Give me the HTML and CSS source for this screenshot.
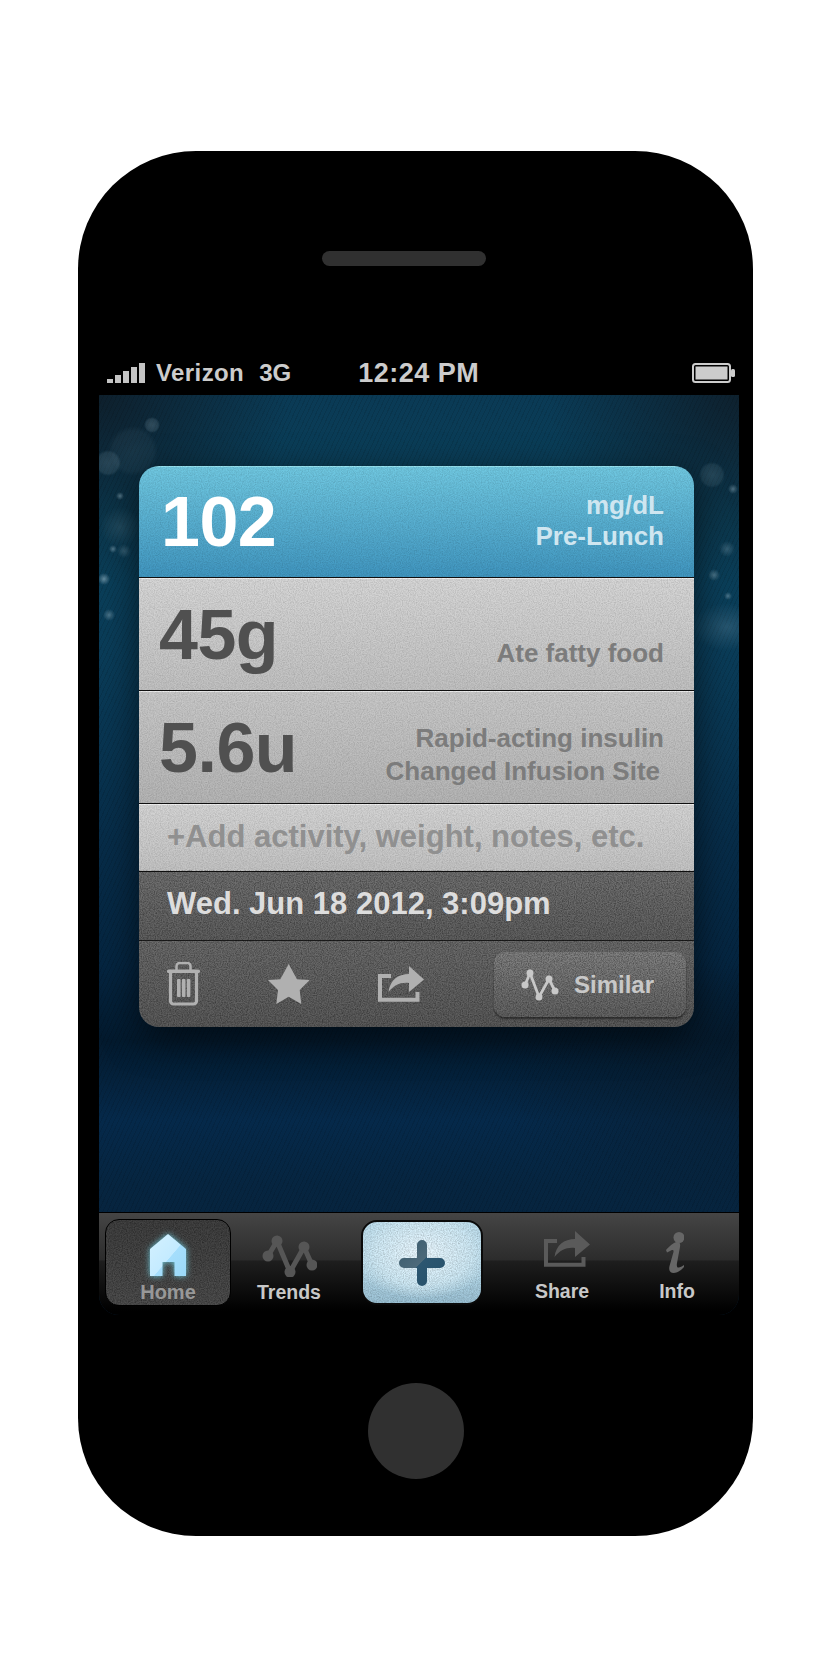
FILE: index.html
```html
<!DOCTYPE html>
<html lang="en">
<head>
<meta charset="UTF-8">
<meta name="viewport" content="width=device-width, initial-scale=1.0">
<title>Glucose Log</title>
<link rel="stylesheet" href="styles.css">
</head>
<body>

<svg class="defs" width="0" height="0">
    <symbol id="share" viewBox="0 0 46 36">
        <path d="M13 10H2V33.800H39.500V26" fill="none" stroke="currentColor" stroke-width="4"/>
        <path d="M10.500 26C12 14 20 8 31 8V0L46 13.500L31 26V17C23 16 16 19 10.500 26Z" fill="currentColor"/>
    </symbol>
    <filter id="noise">
        <feTurbulence type="fractalNoise" baseFrequency="0.85" numOctaves="2" seed="4"/>
        <feColorMatrix values="0 0 0 0 0  0 0 0 0 0  0 0 0 0 0  1.8 0 0 0 -0.6"/>
    </filter>
</svg>

<div class="phone">
    <div class="speaker"></div>

    <!-- status bar -->
    <div class="status">
        <div class="signal"><i></i><i></i><i></i><i></i><i></i></div>
        <span class="carrier">Verizon</span>
        <span class="network">3G</span>
        <span class="clock">12:24 PM</span>
        <svg class="battery" viewBox="0 0 43 20">
            <rect x="1" y="1" width="37" height="18" rx="2.500" fill="none" stroke="#ccc" stroke-width="2"/>
            <rect x="3.500" y="3.500" width="32" height="13" fill="#ccc"/>
            <rect x="39" y="6" width="4" height="8" rx="1.500" fill="#ccc"/>
        </svg>
    </div>

    <div class="screen">
        <!-- log entry card -->
        <div class="card">
            <div class="row row-glucose">
                <div class="value">102</div>
                <div class="note note-glucose">mg/dL<br>Pre-Lunch</div>
            </div>
            <div class="row row-carbs">
                <div class="value">45g</div>
                <div class="note note-carbs">Ate fatty food</div>
            </div>
            <div class="row row-insulin">
                <div class="value">5.6u</div>
                <div class="note note-insulin">Rapid-acting insulin<br><span class="site">Changed Infusion Site</span></div>
            </div>
            <div class="row-add"><span class="line">+Add activity, weight, notes, etc.</span></div>
            <div class="row-date"><span class="line">Wed. Jun 18 2012, 3:09pm</span></div>
            <div class="toolbar">
                <svg class="icon-trash" viewBox="0 0 33 44">
                    <path d="M9.500 8V4a3 3 0 0 1 3-3h8a3 3 0 0 1 3 3V8" fill="none" stroke="currentColor" stroke-width="2.500"/>
                    <rect y="7.500" width="33" height="3.500" rx="1.500" fill="currentColor"/>
                    <path d="M3.500 10V39a3 3 0 0 0 3 3h20a3 3 0 0 0 3-3V10" fill="none" stroke="currentColor" stroke-width="3.200"/>
                    <rect x="10" y="17" width="3.600" height="18" rx="1" fill="currentColor"/>
                    <rect x="14.900" y="17" width="3.600" height="18" rx="1" fill="currentColor"/>
                    <rect x="19.800" y="17" width="3.600" height="18" rx="1" fill="currentColor"/>
                </svg>
                <svg class="icon-star" viewBox="0 0 42 40">
                    <polygon points="20.700,0 29,15.300 41.700,16 31.700,26 33.300,40 20.700,32.700 8.300,40 10,26 0,16 12.300,15.300" fill="currentColor"/>
                </svg>
                <svg class="icon-share"><use href="#share"/></svg>
                <div class="similar">
                    <svg class="icon-zig" viewBox="0 0 42 36">
                        <polyline points="6,18 11,6 20,30 30,12 36,24" fill="none" stroke="currentColor" stroke-width="2.800"/>
                        <circle cx="6" cy="18" r="3.500" fill="currentColor"/>
                        <circle cx="11" cy="6" r="3.500" fill="currentColor"/>
                        <circle cx="20" cy="30" r="3.500" fill="currentColor"/>
                        <circle cx="30" cy="12" r="3.500" fill="currentColor"/>
                        <circle cx="36" cy="24" r="3.500" fill="currentColor"/>
                    </svg>
                    <span class="line">Similar</span>
                </div>
            </div>
            <svg class="grain grain-card" width="555" height="561"><rect width="555" height="561" filter="url(#noise)"/></svg>
        </div>

        <!-- tab bar -->
        <div class="tabbar">
            <div class="tab tab-home">
                <svg class="icon-home" viewBox="0 0 36 42">
                    <defs>
                        <linearGradient id="homeFill" x1="0" y1="0" x2="1" y2="1">
                            <stop offset="0" stop-color="#d4f1ff"/>
                            <stop offset="0.55" stop-color="#c4ebff"/>
                            <stop offset="0.56" stop-color="#a5defc"/>
                            <stop offset="1" stop-color="#9bd9f8"/>
                        </linearGradient>
                    </defs>
                    <path d="M18 0L36 15V42H24.500V28H12.500V42H0V15Z" fill="url(#homeFill)"/>
                </svg>
                <span class="line">Home</span>
                <svg class="grain" width="126" height="87"><rect width="126" height="87" filter="url(#noise)"/></svg>
            </div>
            <div class="tab tab-trends">
                <svg class="icon-trends" viewBox="0 0 56 44">
                    <polyline points="7,23 16,8 29,39 43,14 51,32" fill="none" stroke="currentColor" stroke-width="5"/>
                    <circle cx="7" cy="23" r="5.500" fill="currentColor"/>
                    <circle cx="16" cy="8" r="5.500" fill="currentColor"/>
                    <circle cx="29" cy="39" r="5.500" fill="currentColor"/>
                    <circle cx="43" cy="14" r="5.500" fill="currentColor"/>
                    <circle cx="51" cy="32" r="5.500" fill="currentColor"/>
                </svg>
                <span>Trends</span>
            </div>
            <div class="tab-add">
                <svg class="icon-plus" viewBox="0 0 46 46">
                    <defs>
                        <linearGradient id="plusFill" x1="0" y1="0" x2="1" y2="1">
                            <stop offset="0" stop-color="#38596c"/>
                            <stop offset="0.48" stop-color="#4d6a7a"/>
                            <stop offset="0.49" stop-color="#2c5670"/>
                            <stop offset="1" stop-color="#25506a"/>
                        </linearGradient>
                    </defs>
                    <path d="M18 5a5 5 0 0 1 10 0V18H41a5 5 0 0 1 0 10H28V41a5 5 0 0 1-10 0V28H5a5 5 0 0 1 0-10H18Z" fill="url(#plusFill)"/>
                </svg>
                <svg class="grain" width="122" height="85"><rect width="122" height="85" filter="url(#noise)"/></svg>
            </div>
            <div class="tab tab-share">
                <svg class="icon-share"><use href="#share"/></svg>
                <span>Share</span>
            </div>
            <div class="tab tab-info">
                <svg class="icon-info" viewBox="0 0 18 41">
                    <circle cx="13" cy="5.500" r="5.500" fill="currentColor"/>
                    <path d="M0 18C3 15 7 10.500 11 10C14 10 14.500 12 14 15L11 31C10.500 34 11 36 13 35.500C15 35 16.500 34 18 33L18 35C15 38.500 11 41 7.500 41C4 41 2.500 38 3.500 34L7.500 20C8 17.500 6 17.500 4 19L1 20.500Z" fill="currentColor"/>
                </svg>
                <span>Info</span>
            </div>
        </div>
    </div>

    <div class="home-button"></div>
</div>

</body>
</html>
```

FILE: styles.css
```css
body {
    margin: 0;
    background-color: #fff;
    font-family: "Liberation Sans", Arial, sans-serif;
    font-weight: bold;
}

.defs {
    position: absolute;
}

.phone {
    box-sizing: border-box;
    width: 675px;
    height: 1385px;
    margin: 151px 0 0 78px;
    padding-top: 100px;
    background-color: #000;
    border-radius: 118px;
    display: flex;
    flex-direction: column;
}

.speaker {
    width: 164px;
    height: 15px;
    margin-left: 244px;
    background-color: #303030;
    border-radius: 8px;
    flex: none;
}

/* status bar */

.status {
    box-sizing: border-box;
    height: 44px;
    margin-top: 85px;
    padding: 0 18px 0 29px;
    display: flex;
    align-items: flex-start;
    color: #ccc;
    flex: none;
}

.signal {
    display: flex;
    align-items: flex-end;
    gap: 2.500px;
    height: 20px;
    margin-top: 12px;
    width: 38px;
}

.signal i {
    width: 5.600px;
    background-color: #c4c4c4;
}

.signal i:nth-child(1) { height: 4px; }
.signal i:nth-child(2) { height: 8px; }
.signal i:nth-child(3) { height: 12px; }
.signal i:nth-child(4) { height: 16px; }
.signal i:nth-child(5) { height: 20px; }

.carrier,
.network,
.clock {
    line-height: 30px;
    font-size: 24px;
    margin-top: 7px;
}

.carrier {
    margin-left: 11px;
    letter-spacing: 0.400px;
}

.network {
    margin-left: 15px;
}

.clock {
    margin-left: 67px;
    font-size: 27px;
    letter-spacing: 0.500px;
}

.battery {
    width: 43px;
    height: 20px;
    margin-top: 12px;
    margin-left: auto;
}

/* screen */

.screen {
    width: 640px;
    height: 920px;
    margin-left: 21px;
    flex: none;
    display: flex;
    flex-direction: column;
    border-radius: 0 0 20px 20px;
    background:
        radial-gradient(circle 8px at 53px 30px, rgba(150, 180, 195, 0.26), rgba(150, 180, 195, 0.16) 75%, transparent),
        radial-gradient(circle 25px at 34px 56px, rgba(130, 165, 185, 0.1), rgba(130, 165, 185, 0.07) 80%, transparent),
        radial-gradient(circle 13px at 9px 68px, rgba(150, 180, 195, 0.2), rgba(150, 180, 195, 0.14) 80%, transparent),
        radial-gradient(circle 4px at 21px 101px, rgba(170, 200, 215, 0.45), transparent),
        radial-gradient(circle 20px at 21px 132px, rgba(140, 175, 190, 0.16), transparent),
        radial-gradient(circle 4px at 14px 154px, rgba(170, 200, 215, 0.45), transparent),
        radial-gradient(circle 7px at 25px 156px, rgba(170, 200, 215, 0.25), transparent),
        radial-gradient(circle 6px at 5px 184px, rgba(170, 200, 215, 0.55), transparent),
        radial-gradient(circle 6px at 10px 220px, rgba(170, 200, 215, 0.4), transparent),
        radial-gradient(circle 13px at 613px 80px, rgba(140, 175, 190, 0.2), rgba(140, 175, 190, 0.12) 80%, transparent),
        radial-gradient(circle 5px at 634px 94px, rgba(170, 200, 215, 0.4), transparent),
        radial-gradient(circle 8px at 628px 154px, rgba(170, 200, 215, 0.25), transparent),
        radial-gradient(circle 6px at 615px 180px, rgba(170, 200, 215, 0.4), transparent),
        radial-gradient(circle 4px at 629px 201px, rgba(170, 200, 215, 0.4), transparent),
        radial-gradient(ellipse 36px 24px at 628px 232px, rgba(150, 185, 205, 0.2), transparent),
        repeating-linear-gradient(115deg, rgba(0, 0, 0, 0.1) 0 1px, transparent 1px 4px),
        radial-gradient(circle 190px at 0 0, rgba(14, 30, 42, 0.95), transparent),
        radial-gradient(circle 190px at 100% 0, rgba(14, 30, 42, 0.9), transparent),
        radial-gradient(ellipse 240px 130px at 100% 690px, rgba(8, 25, 40, 0.6), transparent),
        linear-gradient(#0a3a55 0, #0a4059 120px, #0a3c58 260px, #072c48 450px, #052540 570px, #031a2e 645px, #05294a 725px, #062540 790px, #08213a 100%);
}

/* card */

.card {
    position: relative;
    width: 555px;
    height: 561px;
    margin: 71px 0 0 40px;
    border-radius: 20px;
    overflow: hidden;
    flex: none;
    box-shadow: 0 10px 36px rgba(0, 0, 0, 0.6);
}

.grain {
    position: absolute;
    left: 0;
    top: 0;
    opacity: 0.28;
    pointer-events: none;
}

/* grain is faint on the light rows, stronger on the two dark ones */
.grain-card {
    opacity: 0.4;
    -webkit-mask-image: linear-gradient(rgba(0, 0, 0, 0.35) 72%, #000 72%);
    mask-image: linear-gradient(rgba(0, 0, 0, 0.35) 72%, #000 72%);
}

/* text and icons stay clean above the grain */
.value,
.note,
.line,
.toolbar svg,
.icon-home,
.icon-plus {
    position: relative;
    z-index: 1;
}

.row {
    box-sizing: border-box;
    padding: 0 30px 0 20px;
    display: flex;
    justify-content: space-between;
    align-items: flex-start;
    border-bottom: 1px solid #111;
}

.row-glucose {
    height: 112px;
    background: linear-gradient(#70c8e1, #4096c0);
    border-top: 1px solid #97e3f0;
    color: #fff;
}

.row-carbs {
    height: 113px;
    background: linear-gradient(#d6d6d6, #c1c1c1);
    border-top: 1px solid #f2f2f2;
}

.row-insulin {
    height: 113px;
    background: linear-gradient(#c8c8c8, #b5b5b5);
    border-top: 1px solid #eee;
}

.value {
    font-size: 70px;
    line-height: 68px;
    margin-top: 22px;
    color: #505050;
    letter-spacing: -0.500px;
}

.row-glucose .value {
    margin: 21px 0 0 2px;
    color: #fff;
}

.note {
    font-size: 26px;
    text-align: right;
    color: #7c7c7c;
}

.note-glucose {
    line-height: 31px;
    margin-top: 23px;
    color: #cfe6f0;
}

.note-carbs {
    line-height: 31px;
    margin-top: 59px;
}

.note-insulin {
    line-height: 33px;
    margin-top: 30px;
}

.site {
    padding-right: 4px;
}

.row-add {
    box-sizing: border-box;
    height: 68px;
    padding-left: 28px;
    font-size: 31px;
    line-height: 64px;
    color: #909090;
    background: linear-gradient(#d4d4d4, #c3c3c3);
    border-top: 1px solid #f2f2f2;
    border-bottom: 1px solid #111;
}

.row-date {
    box-sizing: border-box;
    height: 69px;
    padding-left: 28px;
    font-size: 31px;
    line-height: 63px;
    color: #ddd;
    background: linear-gradient(#717171, #606060);
    border-bottom: 1px solid #1c1c1c;
}

.toolbar {
    height: 86px;
    padding-left: 28px;
    display: flex;
    align-items: center;
    gap: 69px;
    color: #b0b0b0;
    background: linear-gradient(#6c6c6c, #5b5b5b);
}

.icon-trash {
    width: 33px;
    height: 44px;
    margin-right: -1px;
}

.icon-star {
    width: 42px;
    height: 40px;
    margin-right: -1px;
}

.icon-share {
    width: 46px;
    height: 36px;
}

.similar {
    box-sizing: border-box;
    width: 192px;
    height: 65px;
    margin-left: 1px;
    padding: 2px 0 0 25px;
    display: flex;
    align-items: center;
    gap: 13px;
    border-radius: 11px;
    color: #c8c8c8;
    font-size: 24px;
    background: linear-gradient(#828282, #636363);
    box-shadow: 0 2px 2px rgba(0, 0, 0, 0.45);
}

.icon-zig {
    width: 42px;
    height: 36px;
}

/* tab bar */

.tabbar {
    box-sizing: border-box;
    height: 103px;
    margin-top: auto;
    border-top: 1px solid #000;
    border-radius: 0 0 20px 20px;
    display: flex;
    align-items: flex-start;
    background: linear-gradient(#454545, #2c2c2c 46%, #1e1e1e 47%, #000 96%);
}

.tab {
    box-sizing: border-box;
    display: flex;
    flex-direction: column;
    align-items: center;
    font-size: 19.500px;
    line-height: 24px;
    color: #c8c8c8;
}

.tab-home {
    position: relative;
    overflow: hidden;
    width: 126px;
    height: 87px;
    margin: 6px 0 0 6px;
    padding-top: 14px;
    color: #989898;
    background: linear-gradient(#414141, #4e4e4e);
    border: 1px solid #000;
    border-radius: 14px;
    font-size: 20px;
}

.tab-home .grain {
    left: -1px;
    top: -1px;
    opacity: 0.4;
}

.icon-home {
    width: 36px;
    height: 42px;
    margin-bottom: 4px;
    flex: none;
    filter: drop-shadow(0 0 3px rgba(120, 220, 240, 0.9));
}

.tab-trends {
    width: 70px;
    margin-left: 23px;
    padding-top: 20px;
}

.icon-trends {
    width: 56px;
    height: 44px;
    margin-bottom: 3px;
    color: #565656;
    flex: none;
}

.tab-add {
    position: relative;
    overflow: hidden;
    box-sizing: border-box;
    width: 122px;
    height: 85px;
    margin: 7px 0 0 37px;
    display: flex;
    align-items: center;
    justify-content: center;
    border: 2px solid #0a0a0a;
    border-radius: 16px;
    background:
        radial-gradient(ellipse 70px 46px at 50% 38%, #eaf8ff, #cfeaf6 70%, transparent),
        linear-gradient(#bcdeee, #b2d6e7 65%, #9cc2d5);
}

.tab-add .grain {
    left: -2px;
    top: -2px;
    opacity: 0.2;
}

.icon-plus {
    width: 46px;
    height: 46px;
}

.tab-share {
    width: 72px;
    margin-left: 43px;
    padding-top: 18px;
}

.tab-share .icon-share {
    color: #5a5a5a;
    margin: 0 0 12px 10px;
    flex: none;
}

.tab-info {
    width: 50px;
    margin-left: 54px;
    padding-top: 19px;
}

.icon-info {
    width: 18px;
    height: 41px;
    margin: 0 5px 6px 0;
    color: #666;
    flex: none;
}

.home-button {
    width: 96px;
    height: 96px;
    margin: 68px 0 0 290px;
    background-color: #303030;
    border-radius: 50%;
    flex: none;
}
```
